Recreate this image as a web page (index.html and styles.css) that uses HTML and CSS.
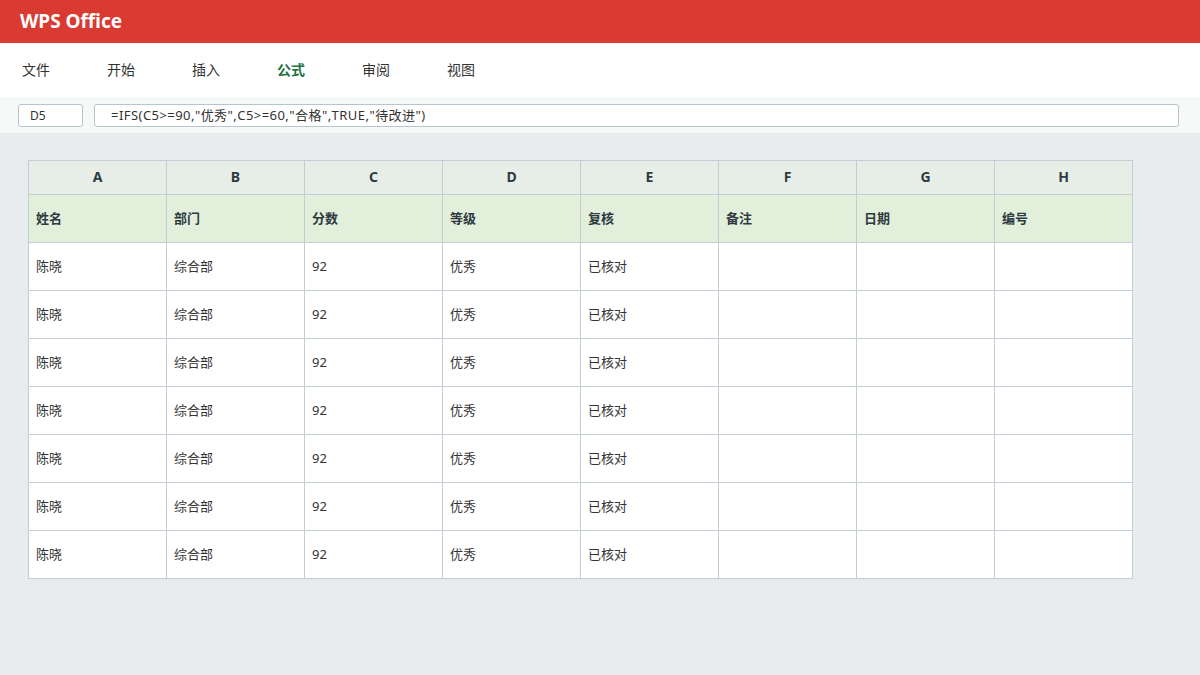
FILE: index.html
```html
<!DOCTYPE html>
<html lang="zh-CN">
<head>
    <meta charset="UTF-8">
    <title>WPS Office</title>
    <link rel="stylesheet" href="styles.css">
</head>
<body>
    <div class="app">
        <div class="title-bar">WPS Office</div>
        <div class="ribbon">
            <span class="tab">文件</span>
            <span class="tab">开始</span>
            <span class="tab">插入</span>
            <span class="tab active">公式</span>
            <span class="tab">审阅</span>
            <span class="tab">视图</span>
        </div>
        <div class="formula-bar">
            <div class="name-box">D5</div>
            <div class="formula-box">=IFS(C5&gt;=90,"优秀",C5&gt;=60,"合格",TRUE,"待改进")</div>
        </div>
        <div class="sheet">
            <table class="grid">
                <thead>
                    <tr class="col-head">
                        <th>A</th><th>B</th><th>C</th><th>D</th><th>E</th><th>F</th><th>G</th><th>H</th>
                    </tr>
                </thead>
                <tbody>
                    <tr class="field-row">
                        <td>姓名</td><td>部门</td><td>分数</td><td>等级</td><td>复核</td><td>备注</td><td>日期</td><td>编号</td>
                    </tr>
                    <tr><td>陈晓</td><td>综合部</td><td>92</td><td>优秀</td><td>已核对</td><td></td><td></td><td></td></tr>
                    <tr><td>陈晓</td><td>综合部</td><td>92</td><td>优秀</td><td>已核对</td><td></td><td></td><td></td></tr>
                    <tr><td>陈晓</td><td>综合部</td><td>92</td><td>优秀</td><td>已核对</td><td></td><td></td><td></td></tr>
                    <tr><td>陈晓</td><td>综合部</td><td>92</td><td>优秀</td><td>已核对</td><td></td><td></td><td></td></tr>
                    <tr><td>陈晓</td><td>综合部</td><td>92</td><td>优秀</td><td>已核对</td><td></td><td></td><td></td></tr>
                    <tr><td>陈晓</td><td>综合部</td><td>92</td><td>优秀</td><td>已核对</td><td></td><td></td><td></td></tr>
                    <tr><td>陈晓</td><td>综合部</td><td>92</td><td>优秀</td><td>已核对</td><td></td><td></td><td></td></tr>
                </tbody>
            </table>
        </div>
    </div>
</body>
</html>
```

FILE: styles.css
```css
:root {
    --brand-red: #D93A31;
    --brand-green: #1F7244;
    --sheet-bg: #E8ECEF;
    --bar-bg: #F7F9F9;
    --grid-line: #C4CDD4;
    --col-head-bg: #E6EEE7;
    --field-bg: #E2EFDA;
    --text-primary: #2E3A42;
    --text-cell: #333333;
}

* {
    margin: 0;
    padding: 0;
    box-sizing: border-box;
    font-family: 'Noto Sans', 'Noto Sans CJK SC', sans-serif;
}

body {
    width: 1200px;
    height: 675px;
    overflow: hidden;
    background: var(--sheet-bg);
    color: var(--text-primary);
}

.app {
    display: flex;
    flex-direction: column;
    height: 100%;
}

.title-bar {
    height: 43px;
    background: var(--brand-red);
    color: white;
    font-size: 19px;
    font-weight: 700;
    line-height: 42px;
    padding-left: 20px;
}

.ribbon {
    height: 54px;
    background: white;
    display: flex;
    align-items: center;
    padding: 0 0 2px 22px;
}

.tab {
    width: 85px;
    font-size: 14px;
    color: #333333;
}

.tab.active {
    color: var(--brand-green);
    font-weight: 700;
}

.formula-bar {
    height: 36px;
    background: var(--bar-bg);
    display: flex;
    align-items: center;
    gap: 11px;
    padding: 0 21px 0 18px;
}

.name-box,
.formula-box {
    height: 23px;
    background: white;
    border: 1px solid #B9C5CD;
    border-radius: 3px;
    font-size: 12px;
    line-height: 21px;
    color: #333333;
}

.name-box {
    width: 65px;
    padding-left: 11px;
}

.formula-box {
    flex: 1;
    padding-left: 16px;
    font-size: 13px;
    line-height: 20px;
    letter-spacing: 0.45px;
}

.sheet {
    flex: 1;
    padding: 27px 28px;
}

.grid {
    border-collapse: collapse;
    table-layout: fixed;
    width: 1105px;
}

.grid th,
.grid td {
    width: 138px;
    border: 1px solid var(--grid-line);
    font-size: 13px;
    text-align: left;
    padding: 0 7px 2px;
}

.col-head th {
    height: 34px;
    background: var(--col-head-bg);
    text-align: center;
    font-weight: 700;
    font-size: 14px;
}

.grid td {
    height: 48px;
    background: white;
    color: var(--text-cell);
}

.field-row td {
    background: var(--field-bg);
    font-weight: 700;
    color: var(--text-primary);
}
```
